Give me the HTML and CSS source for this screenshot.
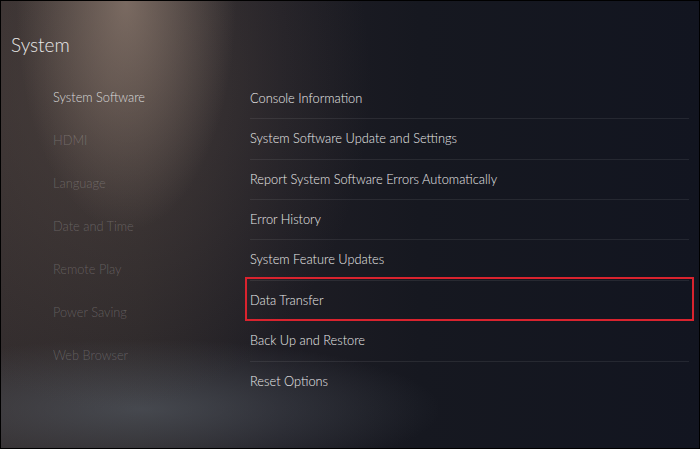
FILE: index.html
```html
<!DOCTYPE html>
<html lang="en">
<head>
<meta charset="utf-8">
<title>System</title>
<link rel="stylesheet" href="styles.css">
</head>
<body>
<div class="screen">
  <h1 class="title">System</h1>
  <div class="main">
    <ul class="nav">
      <li class="nav-item active">System Software</li>
      <li class="nav-item">HDMI</li>
      <li class="nav-item">Language</li>
      <li class="nav-item">Date and Time</li>
      <li class="nav-item">Remote Play</li>
      <li class="nav-item">Power Saving</li>
      <li class="nav-item">Web Browser</li>
    </ul>
    <ul class="list">
      <li class="row">Console Information</li>
      <li class="row">System Software Update and Settings</li>
      <li class="row">Report System Software Errors Automatically</li>
      <li class="row">Error History</li>
      <li class="row">System Feature Updates</li>
      <li class="row highlight">Data Transfer</li>
      <li class="row">Back Up and Restore</li>
      <li class="row">Reset Options</li>
    </ul>
  </div>
</div>
</body>
</html>
```
FILE: styles.css
```css
html, body {
  margin: 0;
  padding: 0;
  background: #000;
}
.screen {
  width: 700px;
  height: 449px;
  box-sizing: border-box;
  border: 1px solid #000;
  overflow: hidden;
  font-family: Lato, "Open Sans", sans-serif;
  color: #dcdcdc;
  background:
    radial-gradient(ellipse 110px 230px at 125px 0px, rgba(145,126,114,0.72), rgba(145,126,114,0) 100%),
    radial-gradient(ellipse 260px 330px at 110px 80px, rgba(100,85,78,0.45), rgba(100,85,78,0) 100%),
    radial-gradient(ellipse 300px 70px at 140px 408px, rgba(92,100,110,0.55), rgba(92,100,110,0) 100%),
    linear-gradient(90deg, #322c2d 0%, #2b2729 20%, #1e1d24 40%, #161820 60%, #121520 100%);
}
.title {
  margin: 0;
  padding: 32px 0 0 10px;
  font-size: 19px;
  line-height: 24px;
  font-weight: 300;
  color: #e8e8e8;
}
.main {
  display: flex;
  margin-top: 18.5px;
}
.nav {
  list-style: none;
  margin: 0;
  padding: 0 0 0 52px;
  width: 249px;
  box-sizing: border-box;
  flex: none;
}
.nav-item {
  height: 43px;
  line-height: 43px;
  font-size: 12.8px;
  font-weight: 300;
  color: rgba(255,255,255,0.22);
  white-space: nowrap;
}
.nav-item.active {
  color: #dadada;
}
.list {
  list-style: none;
  margin: 0;
  padding: 3.3px 0 0 0;
  width: 439px;
  flex: none;
}
.row {
  position: relative;
  height: 39.4px;
  line-height: 39.4px;
  font-size: 12.8px;
  font-weight: 300;
  color: #ebebeb;
  border-bottom: 1px solid rgba(255,255,255,0.08);
  white-space: nowrap;
}
.row:last-child {
  border-bottom: none;
}
.highlight::after {
  content: "";
  position: absolute;
  left: -5px;
  right: -5px;
  top: -4px;
  bottom: -1px;
  border: 2px solid #d9232e;
}
```
